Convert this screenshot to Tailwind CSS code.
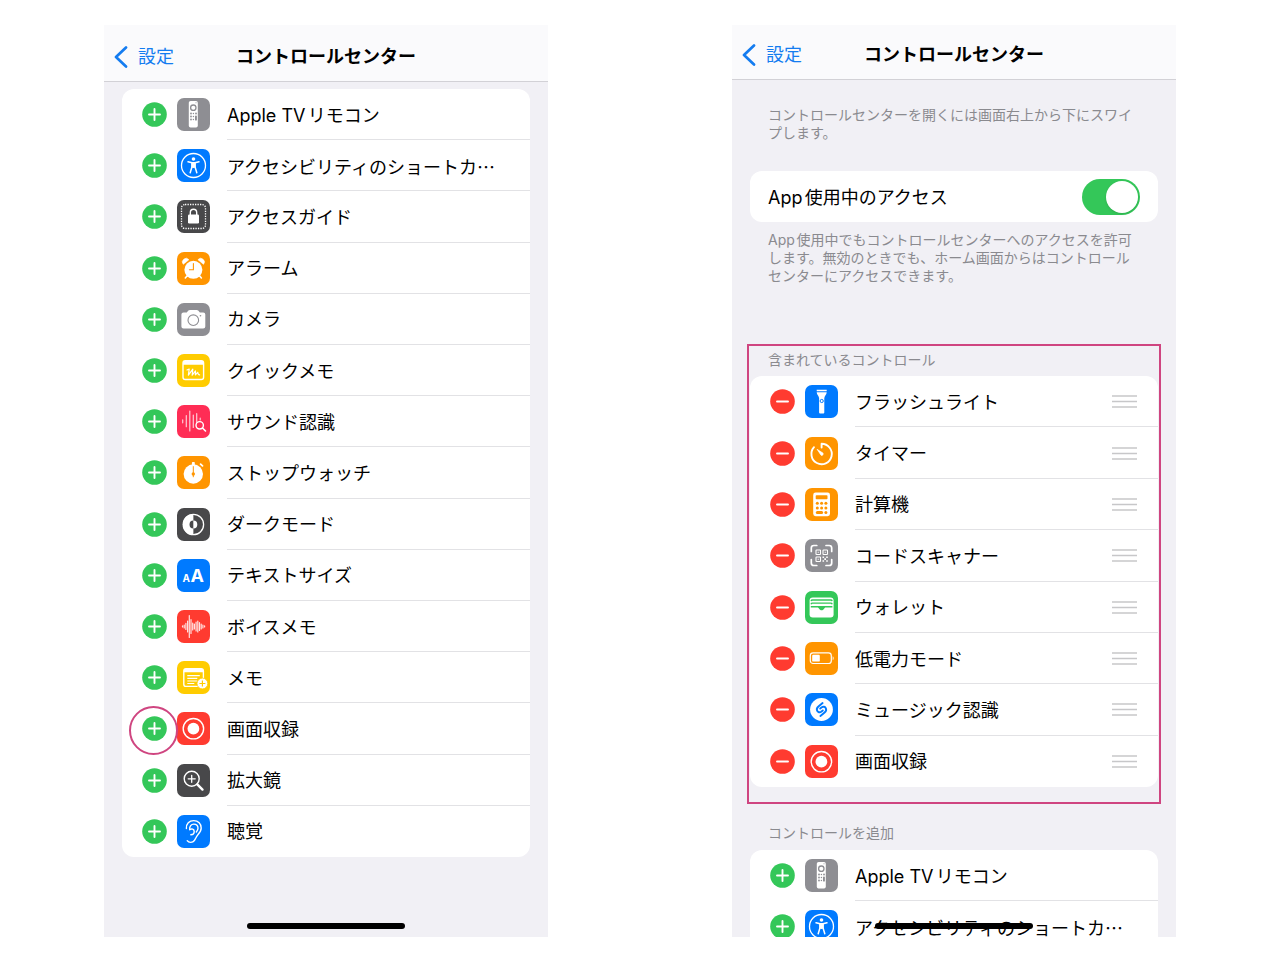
<!DOCTYPE html>
<html lang="ja">
<head>
<meta charset="utf-8">
<meta name="viewport" content="width=device-width, initial-scale=1">
<title>コントロールセンター</title>
<script src="https://cdn.jsdelivr.net/npm/@tailwindcss/browser@4"></script>
</head>
<body class="bg-white font-['Inter','Noto_Sans_CJK_JP',sans-serif] text-black [text-autospace:normal]">

<svg class="hidden" aria-hidden="true">
  <symbol id="remote" viewBox="0 0 33 33">
    <rect x="11.8" y="3" width="9" height="26.5" rx="1.8" fill="#fff"/>
    <circle cx="16.3" cy="9.7" r="2.7" fill="none" stroke="#8e8e93" stroke-width="1.3"/>
    <circle cx="19" cy="4.8" r=".5" fill="#8e8e93"/>
    <g fill="#8e8e93"><circle cx="14" cy="15.5" r=".9"/><circle cx="16.4" cy="15.5" r=".7"/><circle cx="19" cy="15.5" r=".9"/><circle cx="14" cy="18.5" r=".9"/><circle cx="16.4" cy="18.5" r=".7"/><circle cx="14" cy="21.5" r=".9"/><circle cx="16.4" cy="21.5" r=".7"/><rect x="18" y="17.6" width="1.9" height="5" rx=".9"/></g>
  </symbol>
  <symbol id="access" viewBox="0 0 33 33">
    <circle cx="16.5" cy="16.5" r="12" fill="none" stroke="#fff" stroke-width="1.3"/>
    <circle cx="16.5" cy="10" r="1.8" fill="#fff"/>
    <path d="M11 12.800l4 .9v4l-1.800 6M22 12.800l-4 .9v4l1.800 6" fill="none" stroke="#fff" stroke-width="1.500" stroke-linecap="round" stroke-linejoin="round"/>
    <path d="M14.300 13h4.400v5.500l-2.200.6-2.200-.6z" fill="#fff"/>
  </symbol>
  <symbol id="guided" viewBox="0 0 33 33">
    <rect x="4.500" y="4.500" width="24" height="24" rx="3.500" fill="none" stroke="#fff" stroke-width="1.300" stroke-dasharray="1.300 1.200"/>
    <rect x="11" y="14.500" width="11" height="9" rx="1.200" fill="#fff"/>
    <path d="M13.300 15v-2.300a3.200 3.400 0 0 1 6.400 0V15" fill="none" stroke="#fff" stroke-width="1.400"/>
  </symbol>
  <symbol id="alarm" viewBox="0 0 33 33">
    <path d="M10 24l-1.700 2M22.700 24l1.700 2" stroke="#fff" stroke-width="1.600" stroke-linecap="round"/>
    <circle cx="16.400" cy="17.800" r="9" fill="#fff"/>
    <path d="M6.300 12.300a3.500 3.500 0 0 1 5.600-4.600zM26.500 12.300a3.500 3.500 0 0 0-5.600-4.600z" fill="#fff" stroke="#fff" stroke-width=".6" stroke-linejoin="round"/>
    <path d="M16.400 11.500v6.200h-4" fill="none" stroke="#ff9500" stroke-width="1.100" stroke-linecap="round"/>
  </symbol>
  <symbol id="camera" viewBox="0 0 33 33">
    <path d="M6.500 9.500h3.200l1.700-1.900q.6-.7 1.500-.7h6.800q.9 0 1.500.7l1.700 1.900h3.300q2.100 0 2.100 2.100v11.800q0 2.100-2.100 2.100H6.500q-2.100 0-2.100-2.100V11.600q0-2.100 2.100-2.100z" fill="#fff"/>
    <circle cx="16.300" cy="17.200" r="5.300" fill="none" stroke="#8e8e93" stroke-width="1.100"/><circle cx="23.500" cy="12.800" r=".8" fill="#8e8e93"/>
  </symbol>
  <symbol id="quick" viewBox="0 0 33 33">
    <rect x="6" y="6.800" width="20.600" height="18.700" rx="2.300" fill="none" stroke="#fff" stroke-width="1.400"/>
    <path d="M6 10.700V9q0-2.200 2.200-2.200h16.200q2.200 0 2.200 2.200v1.700z" fill="#fff"/>
    <path d="M10 16l2.200-1-.8 6.200 4.400-6-.6 6 3.300-4.300-.1 3.900 2.300-2.500q.2 2.500 1.900 2.600" fill="none" stroke="#fff" stroke-width="1.200" stroke-linecap="round" stroke-linejoin="round"/>
  </symbol>
  <symbol id="sound" viewBox="0 0 33 33">
    <path d="M5.700 14.800v3M9.300 10.500v11.200M12.800 6v20M16.300 10v12.500M19.700 8.500v9M23.200 13v2" stroke="#fff" stroke-opacity=".75" stroke-width="1.200" stroke-linecap="round"/>
    <circle cx="22.700" cy="20.300" r="3.700" fill="#ff2d55" stroke="#fff" stroke-width="1.400"/><path d="M25.500 23l3 3" stroke="#fff" stroke-width="1.600" stroke-linecap="round"/>
  </symbol>
  <symbol id="stopwatch" viewBox="0 0 33 33">
    <circle cx="16.300" cy="18" r="9.700" fill="#fff"/><rect x="14.900" y="6" width="2.900" height="4" rx=".8" fill="#fff"/>
    <path d="M23.600 8.200l1.900 1.700" stroke="#fff" stroke-width="1.800" stroke-linecap="round"/>
    <path d="M16.300 10.600v10.200" stroke="#ff9500" stroke-width="1" stroke-linecap="round"/><circle cx="16.300" cy="18" r="1.700" fill="#ff9500"/>
  </symbol>
  <symbol id="dark" viewBox="0 0 33 33">
    <circle cx="16.400" cy="16.500" r="10.200" fill="none" stroke="#fff" stroke-width="1.300"/>
    <path d="M16.400 6v21a10.500 10.500 0 0 1 0-21z" fill="#fff"/>
    <path d="M16.400 12.600v7.800a3.900 3.900 0 0 1 0-7.800z" fill="#48484a"/><path d="M16.400 12.600v7.800a3.900 3.900 0 0 0 0-7.800z" fill="#fff"/>
  </symbol>
  <symbol id="textsize" viewBox="0 0 33 33">
    <text x="5.500" y="22.500" fill="#fff" font-size="10" font-weight="700">A</text><text x="13.500" y="22.500" fill="#fff" font-size="18" font-weight="700">A</text>
  </symbol>
  <symbol id="voice" viewBox="0 0 33 33">
    <path d="M5.500 15.900v1M7.200 15v3M8.900 13.400v6M10.600 11v11M12.300 5.500v22M14 9.500v14M15.700 13v7M17.400 14v5M19.100 12v9M20.800 11v11M22.500 12.500v8M24.200 14v5M25.900 15v3M27.600 15.900v1" stroke="#fff" stroke-opacity=".85" stroke-width="1.200" stroke-linecap="round"/>
  </symbol>
  <symbol id="memo" viewBox="0 0 33 33">
    <rect x="6.800" y="7.800" width="19.600" height="17.600" rx="2.200" fill="none" stroke="#fff" stroke-width="1.400"/>
    <path d="M6.800 11.300V10q0-2.200 2.200-2.200h15.200q2.200 0 2.200 2.200v1.300z" fill="#fff"/>
    <path d="M10.300 14.600h12.500M10.300 17.400h10M10.300 20h10M10.300 22.500h7" stroke="#fff" stroke-width="1.200"/>
    <circle cx="25.400" cy="22.500" r="5.400" fill="#fff" stroke="#ffcc00" stroke-width=".8"/><path d="M22.400 22.500h6M25.400 19.500v6" stroke="#ffcc00" stroke-width="1.200"/>
  </symbol>
  <symbol id="record" viewBox="0 0 33 33">
    <circle cx="16.400" cy="16.700" r="10.200" fill="none" stroke="#fff" stroke-width="1.400"/><circle cx="16.400" cy="16.700" r="5.900" fill="#fff"/>
  </symbol>
  <symbol id="magnifier" viewBox="0 0 33 33">
    <circle cx="14.700" cy="14.800" r="7.500" fill="none" stroke="#fff" stroke-width="1.400"/><path d="M11.200 14.800h7M14.700 11.300v7" stroke="#fff" stroke-width="1.300" stroke-linecap="round"/><path d="M20.300 20.400l5.200 5.200" stroke="#fff" stroke-width="2.400" stroke-linecap="round"/>
  </symbol>
  <symbol id="ear" viewBox="0 0 33 33">
    <g fill="none" stroke="#fff" stroke-width="1.400" stroke-linecap="round">
    <path d="M9.400 13.500C9 8.700 12.300 5.600 16.700 5.600c4.600 0 7.500 3.300 7.500 7.300 0 3.200-1.700 5-3.600 7.200-1.500 1.900-1.900 3.600-3.200 5.400-1.800 2.400-5.600 2.500-7.200.2"/>
    <path d="M12.700 14.600c-.3-3.400 1.400-5.500 4.100-5.500 2.600 0 4.200 1.800 4.200 4.200 0 1.500-.7 2.600-1.700 3.700"/>
    <path d="M12.700 14.600c2-1.300 4.500-.5 4.500 1.900 0 2-1.300 3.200-3.400 3.200"/>
    </g>
  </symbol>
  <symbol id="flash" viewBox="0 0 33 33">
    <path d="M11.700 4.700h10v1.600h-10zM11.700 7.300h10c0 2.500-2.400 3.700-2.400 6v14.200q0 1-1 1h-3.200q-1 0-1-1V13.300c0-2.300-2.400-3.500-2.400-6z" fill="#fff"/><circle cx="16.700" cy="16" r="1.600" fill="none" stroke="#007aff" stroke-width="1"/>
  </symbol>
  <symbol id="timer" viewBox="0 0 33 33">
    <path d="M16.600 10.500V6.800a10.200 10.200 0 1 1-7.600 3.400" fill="none" stroke="#fff" stroke-width="1.900" stroke-linecap="round" stroke-linejoin="round"/>
    <path d="M12 12.200l6 3.900a1.500 1.500 0 0 1-2 2.100z" fill="#fff" stroke="#fff" stroke-width=".6" stroke-linejoin="round"/>
  </symbol>
  <symbol id="calc" viewBox="0 0 33 33">
    <rect x="8.200" y="4.600" width="16.800" height="23.600" rx="2.400" fill="#fff"/><rect x="10.700" y="7.200" width="11.800" height="4" rx=".8" fill="#ff9500"/>
    <g fill="#ff9500"><circle cx="12.300" cy="15.300" r="1.500"/><circle cx="16.600" cy="15.300" r="1.500"/><circle cx="20.900" cy="15.300" r="1.500"/><circle cx="12.300" cy="20" r="1.500"/><circle cx="16.600" cy="20" r="1.500"/><circle cx="20.900" cy="20" r="1.500"/><rect x="10.800" y="23.100" width="7.300" height="3" rx="1.500"/><circle cx="20.900" cy="24.600" r="1.500"/></g>
  </symbol>
  <symbol id="scanner" viewBox="0 0 33 33">
    <path d="M6.300 12.500V9q0-2.500 2.500-2.500h3M21 6.500h3.200q2.500 0 2.500 2.500v3.500M26.700 20.500V24q0 2.500-2.500 2.500H21M11.800 26.500h-3q-2.500 0-2.500-2.500v-3.500" fill="none" stroke="#fff" stroke-width="1.700" stroke-linecap="round"/>
    <g fill="none" stroke="#fff" stroke-width="1.100"><rect x="11" y="11" width="4.500" height="4.500" rx=".6"/><rect x="18" y="11" width="4.500" height="4.500" rx=".6"/><rect x="11" y="18" width="4.500" height="4.500" rx=".6"/></g>
    <path d="M12.700 12.700h1.100v1.100h-1.100zM19.700 12.700h1.100v1.100h-1.100zM12.700 19.700h1.100v1.100h-1.100zM17.500 17.500h1.600v1.600h-1.600zM21.200 17.500h1.600v1.600h-1.600zM19.300 19.300h1.700V21h-1.700zM17.500 21.200h1.600v1.600h-1.600zM21.200 21.200h1.600v1.600h-1.600z" fill="#fff"/>
  </symbol>
  <symbol id="wallet" viewBox="0 0 33 33">
    <rect x="4.600" y="6.400" width="24" height="20" rx="3.200" fill="#fff"/>
    <path d="M6 10q.3-1 1.500-1h18.200q1.200 0 1.500 1M6 13.200q.3-1 1.500-1h18.200q1.200 0 1.500 1" fill="none" stroke="#34c759" stroke-width="1.300"/>
    <path d="M5.800 16.400V15h21.600v1.400h-6.300c-1.400 0-1.600.7-2.200 1.600-1.100 1.700-3.500 1.700-4.600 0-.6-.9-.8-1.600-2.200-1.600z" fill="#34c759"/>
  </symbol>
  <symbol id="battery" viewBox="0 0 33 33">
    <rect x="5.300" y="10.900" width="21" height="10.600" rx="2.800" fill="none" stroke="#fff" stroke-width="1.200"/><rect x="7.200" y="12.800" width="7.600" height="6.800" rx="1.200" fill="#fff"/><path d="M27.700 14.200c1.300.5 1.300 3.500 0 4z" fill="#fff"/>
  </symbol>
  <symbol id="shazam" viewBox="0 0 33 33">
    <circle cx="16.500" cy="16.500" r="11.400" fill="#fff"/>
    <path d="M17.600 10l-4.200 3.500c-3.400 2.900-.4 7.400 2.800 5.200l1.600-1.300M15.400 23l4.200-3.500c3.400-2.900.4-7.400-2.800-5.200l-1.600 1.300" fill="none" stroke="#007aff" stroke-width="1.900" stroke-linecap="round"/>
  </symbol>
  <symbol id="plus" viewBox="0 0 25 25"><circle cx="12.500" cy="12.500" r="12.300" fill="#34c759"/><path d="M7 12.500h11M12.500 7v11" stroke="#fff" stroke-width="1.900" stroke-linecap="round"/></symbol>
  <symbol id="minus" viewBox="0 0 25 25"><circle cx="12.500" cy="12.500" r="12.300" fill="#ff3b30"/><path d="M7 12.500h11" stroke="#fff" stroke-width="1.900" stroke-linecap="round"/></symbol>
  <symbol id="back" viewBox="0 0 14 22"><path d="M12 1.500L2 11l10 9.500" fill="none" stroke="#147cf0" stroke-width="2.700" stroke-linecap="round" stroke-linejoin="round"/></symbol>
  <symbol id="grip" viewBox="0 0 25 13"><path d="M0 1h25M0 6.500h25M0 12h25" stroke="#c7c7c9" stroke-width="1.600"/></symbol>
</svg>

<main class="grid grid-cols-2 gap-[184px] px-[104px] py-[25px]">
  <section class="relative bg-[#f1f0f5] pb-20" aria-label="コントロールを追加する画面">
    <header class="grid h-[57px] grid-cols-[1fr_auto_1fr] items-center border-b border-[#d2d1d6] bg-[#fafafc] px-[10px] pt-[7px] text-lg leading-6">
      <a href="#" class="flex items-center gap-[10px] text-[#147cf0]"><svg class="h-[22px] w-[14px]" aria-hidden="true"><use href="#back"/></svg>設定</a>
      <h1 class="font-bold">コントロールセンター</h1>
    </header>
    <ul id="available" class="mx-[18px] mt-[7px] grid min-h-[768px] auto-rows-fr rounded-[12px] bg-white"></ul>
    <div class="absolute bottom-2 left-1/2 h-[6px] w-[158px] -translate-x-1/2 rounded-full bg-black"></div>
  </section>

  <section class="relative bg-[#f1f0f5]" aria-label="含まれているコントロールの画面">
    <header class="grid h-[55px] grid-cols-[1fr_auto_1fr] items-center border-b border-[#d2d1d6] bg-[#fafafc] px-[10px] pt-[5px] text-lg leading-6">
      <a href="#" class="flex items-center gap-[10px] text-[#147cf0]"><svg class="h-[22px] w-[14px]" aria-hidden="true"><use href="#back"/></svg>設定</a>
      <h1 class="font-bold">コントロールセンター</h1>
    </header>
    <div class="px-[18px] pt-[26px]">
      <p class="px-[18px] text-sm leading-[18px] text-[#8a8a8f]">コントロールセンターを開くには画面右上から下にスワイプします。</p>
      <label class="mt-[29px] flex h-[51px] items-center justify-between rounded-[12px] bg-white px-[18px] text-lg leading-6"><span class="pt-[2px]">App使用中のアクセス</span>
        <input type="checkbox" role="switch" checked class="h-9 w-[58px] appearance-none rounded-full bg-[#d9d9de] before:m-[2px] before:block before:size-8 before:rounded-full before:bg-white before:shadow checked:bg-[#34c759] checked:before:ml-6">
      </label>
      <p class="mt-[9px] px-[18px] text-sm leading-[18px] text-[#8a8a8f]">App使用中でもコントロールセンターへのアクセスを許可します。無効のときでも、ホーム画面からはコントロールセンターにアクセスできます。</p>
      <div class="relative mt-[66px]">
        <h2 class="px-[18px] text-sm leading-[18px] text-[#8a8a8f]">含まれているコントロール</h2>
        <ul id="included" class="mt-[7px] grid min-h-[411px] auto-rows-fr rounded-[12px] bg-white"></ul>
        <div class="pointer-events-none absolute -inset-x-[3px] -top-[7px] -bottom-[17px] border-2 border-[#cf4580]"></div>
      </div>
      <h2 class="mt-[37px] px-[18px] text-sm leading-[18px] text-[#8a8a8f]">コントロールを追加</h2>
      <ul id="more" class="mt-[8px] grid max-h-[87px] auto-rows-[51px] overflow-hidden rounded-t-[12px] bg-white"></ul>
    </div>
    <div class="absolute bottom-2 left-1/2 h-[6px] w-[158px] -translate-x-1/2 rounded-full bg-black"></div>
  </section>
</main>

<script>
const GRAY = 'bg-[#8e8e93]', BLUE = 'bg-[#007aff]', DARK = 'bg-[#48484a]', ORANGE = 'bg-[#ff9500]',
      YELLOW = 'bg-[#ffcc00]', PINK = 'bg-[#ff2d55]', RED = 'bg-[#ff3b30]', GREEN = 'bg-[#34c759]';
const available = [
  ['remote', GRAY, 'Apple TVリモコン'], ['access', BLUE, 'アクセシビリティのショートカ…'],
  ['guided', DARK, 'アクセスガイド'], ['alarm', ORANGE, 'アラーム'], ['camera', GRAY, 'カメラ'],
  ['quick', YELLOW, 'クイックメモ'], ['sound', PINK, 'サウンド認識'], ['stopwatch', ORANGE, 'ストップウォッチ'],
  ['dark', DARK, 'ダークモード'], ['textsize', BLUE, 'テキストサイズ'], ['voice', RED, 'ボイスメモ'],
  ['memo', YELLOW, 'メモ'], ['record', RED, '画面収録', true], ['magnifier', DARK, '拡大鏡'], ['ear', BLUE, '聴覚']
];
const included = [
  ['flash', BLUE, 'フラッシュライト'], ['timer', ORANGE, 'タイマー'], ['calc', ORANGE, '計算機'],
  ['scanner', GRAY, 'コードスキャナー'], ['wallet', GREEN, 'ウォレット'], ['battery', ORANGE, '低電力モード'],
  ['shazam', BLUE, 'ミュージック認識'], ['record', RED, '画面収録']
];
// The ellipsis takes the Japanese font, whose dots sit at mid-height.
const label = (name) => name.replace('…', `<span class="font-['Noto_Sans_CJK_JP',sans-serif]">…</span>`);
const row = (action) => ([icon, color, name, marked]) => `
  <li class="group flex items-center pl-5">
    <button type="button" class="relative mr-[10px] size-[25px] shrink-0" aria-label="${name}を${action === 'plus' ? '追加' : '削除'}">
      <svg class="size-[25px]" aria-hidden="true"><use href="#${action}"/></svg>
      ${marked ? '<span class="absolute -top-[10px] -right-[11px] -bottom-[14px] -left-[13px] rounded-full border-2 border-[#cf4580]"></span>' : ''}
    </button>
    <svg class="size-[33px] shrink-0 rounded-[7px] ${color}" aria-hidden="true"><use href="#${icon}"/></svg>
    <div class="ml-[17px] flex min-w-0 flex-1 items-center justify-between self-stretch border-b border-[#e2e2e5] pt-px pr-[21px] group-last:border-transparent">
      <span class="pt-[2px] text-lg leading-5 whitespace-nowrap">${label(name)}</span>
      ${action === 'minus' ? `<button type="button" aria-label="${name}を並べ替え"><svg class="h-[13px] w-[25px]" aria-hidden="true"><use href="#grip"/></svg></button>` : ''}
    </div>
  </li>`;
document.getElementById('available').innerHTML = available.map(row('plus')).join('');
document.getElementById('included').innerHTML = included.map(row('minus')).join('');
document.getElementById('more').innerHTML = available.slice(0, 2).map(row('plus')).join('');
</script>
</body>
</html>
